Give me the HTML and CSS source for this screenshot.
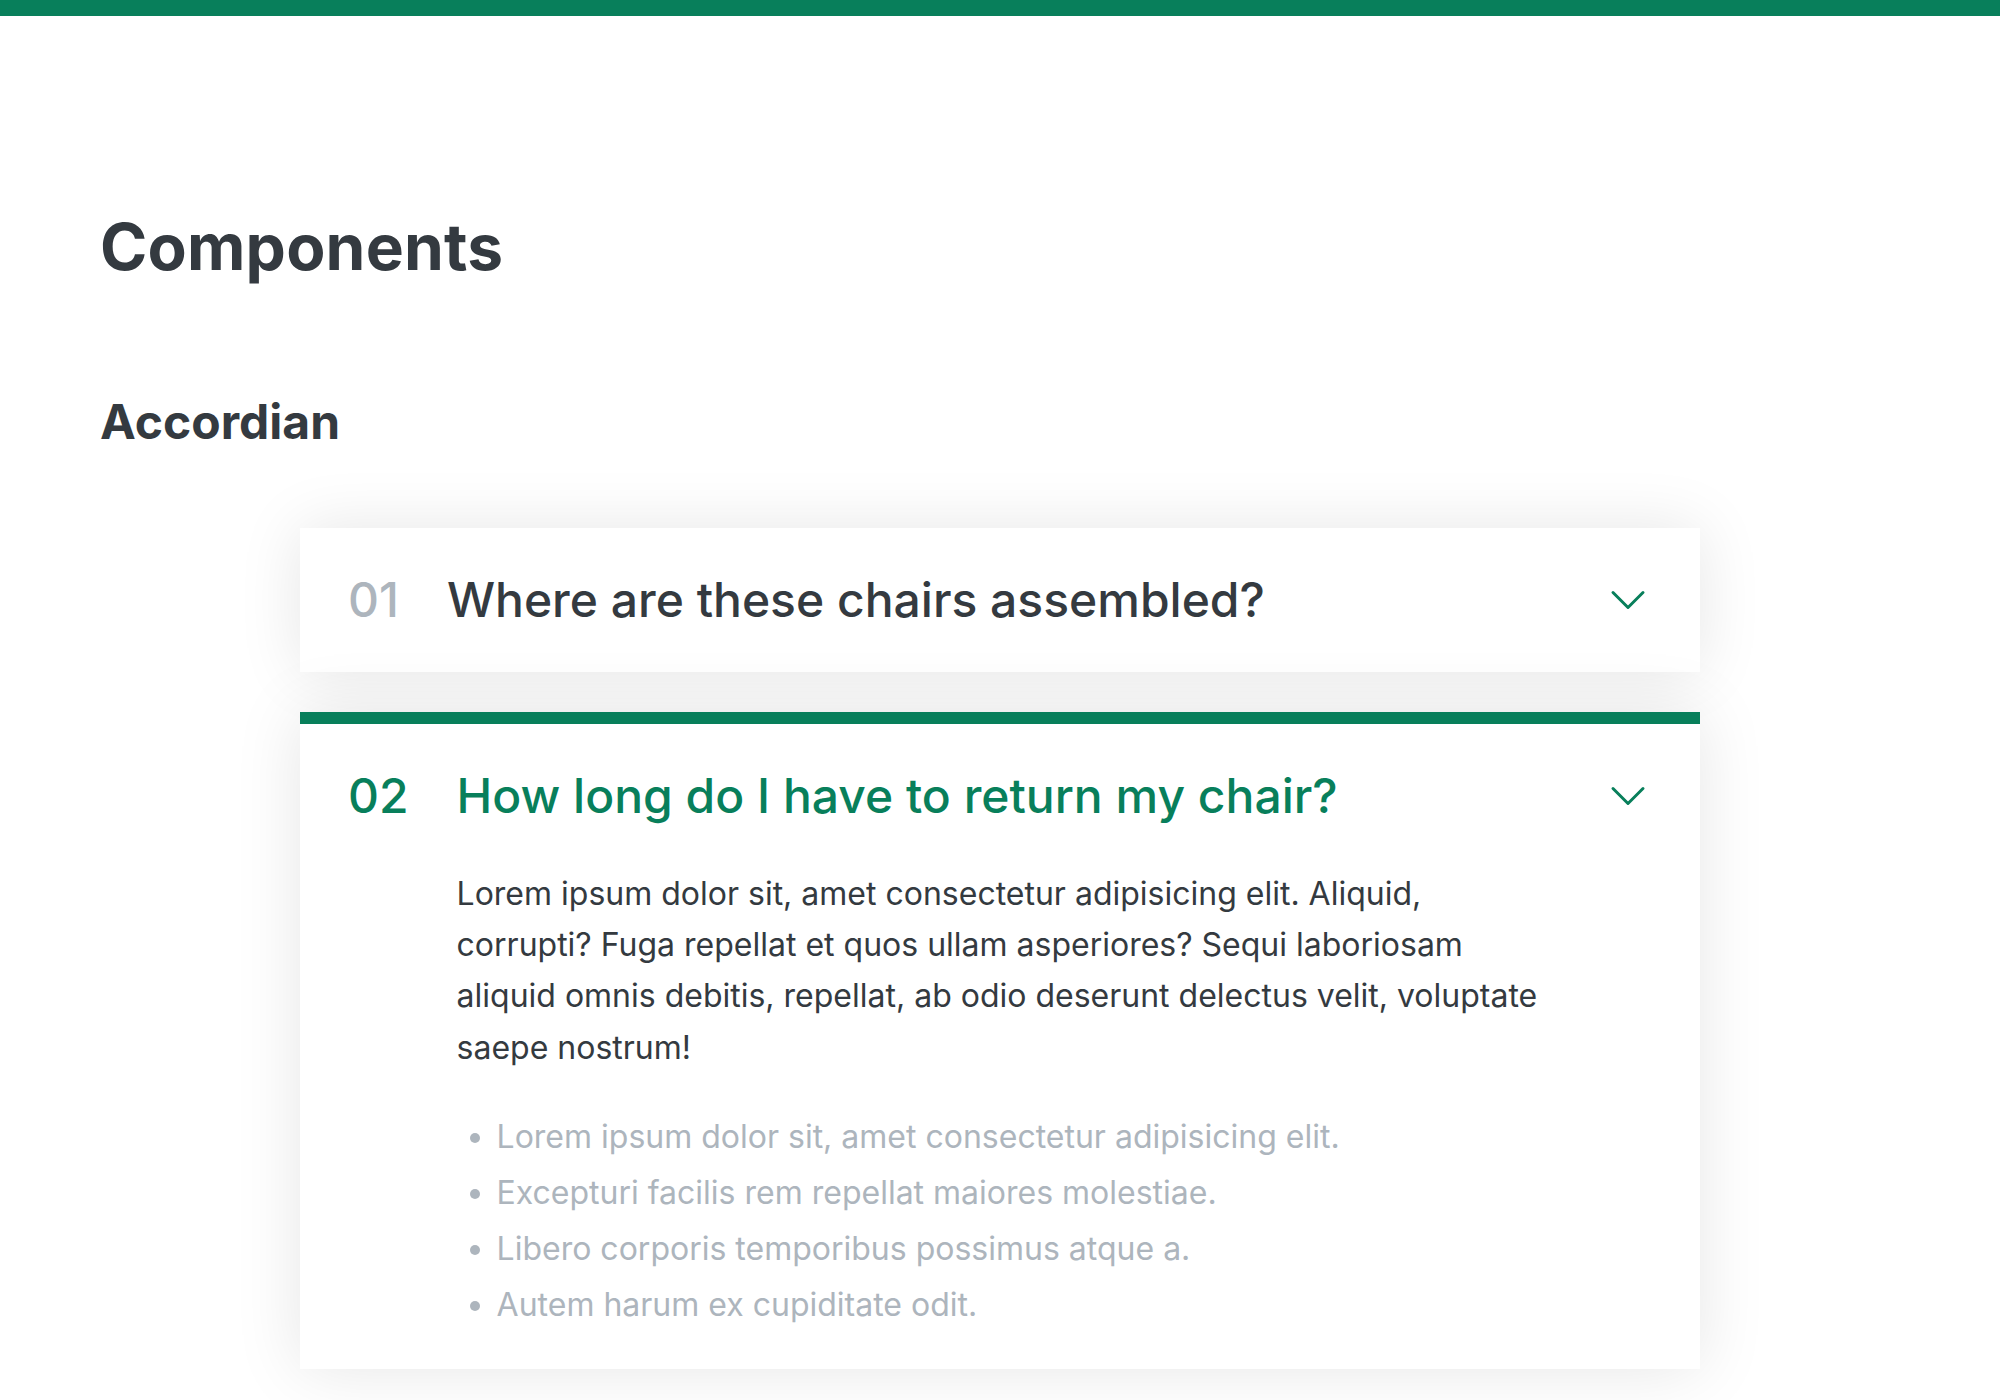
FILE: index.html
```html
<!DOCTYPE html>
<html lang="en">
<head>
<meta charset="utf-8">
<title>Components</title>
<link rel="stylesheet" href="styles.css">
</head>
<body>
<div class="container">
  <h1 class="page-title">Components</h1>
  <h2 class="section-title">Accordian</h2>

  <div class="accordion">
    <div class="item">
      <p class="number">01</p>
      <p class="text">Where are these chairs assembled?</p>
      <svg class="icon" xmlns="http://www.w3.org/2000/svg" fill="none" viewBox="0 0 24 24" stroke-width="1.5"><path stroke-linecap="round" stroke-linejoin="round" d="M19.5 8.25l-7.5 7.5-7.5-7.5"/></svg>
    </div>

    <div class="item open">
      <p class="number">02</p>
      <p class="text">How long do I have to return my chair?</p>
      <svg class="icon" xmlns="http://www.w3.org/2000/svg" fill="none" viewBox="0 0 24 24" stroke-width="1.5"><path stroke-linecap="round" stroke-linejoin="round" d="M19.5 8.25l-7.5 7.5-7.5-7.5"/></svg>
      <div class="hidden-box">
        <p>Lorem ipsum dolor sit, amet consectetur adipisicing elit. Aliquid, corrupti? Fuga repellat et quos ullam asperiores? Sequi laboriosam aliquid omnis debitis, repellat, ab odio deserunt delectus velit, voluptate saepe nostrum!</p>
        <ul>
          <li>Lorem ipsum dolor sit, amet consectetur adipisicing elit.</li>
          <li>Excepturi facilis rem repellat maiores molestiae.</li>
          <li>Libero corporis temporibus possimus atque a.</li>
          <li>Autem harum ex cupiditate odit.</li>
        </ul>
      </div>
    </div>
  </div>
</div>
</body>
</html>
```

FILE: styles.css
```css
* {
  margin: 0;
  padding: 0;
  box-sizing: border-box;
}

body {
  font-family: Inter, "Noto Sans", sans-serif;
  color: #343a40;
  border-top: 16px solid #087f5b;
  line-height: 1;
  background: #fff;
}

.container {
  padding: 199px 100px 200px 100px;
}

.page-title {
  font-size: 64px;
  font-weight: 700;
  line-height: 1;
  letter-spacing: 0.2px;
}

.section-title {
  font-size: 48px;
  font-weight: 700;
  line-height: 1;
  margin-top: 119px;
}

.accordion {
  width: 1400px;
  margin: 82px auto 0;
  display: flex;
  flex-direction: column;
  gap: 40px;
}

.item {
  box-shadow: 0 0 64px rgba(0, 0, 0, 0.1);
  padding: 48px;
  display: grid;
  grid-template-columns: auto 1fr auto;
  column-gap: 48px;
  row-gap: 48px;
  align-items: center;
  background: #fff;
}

.number,
.text {
  font-size: 48px;
  font-weight: 500;
  line-height: 1;
}

.number {
  color: #adb5bd;
}

.icon {
  width: 48px;
  height: 48px;
  stroke: #087f5b;
}

.hidden-box {
  grid-column: 2;
}

.open {
  border-top: 12px solid #087f5b;
}

.open .number,
.open .text {
  color: #087f5b;
}

.hidden-box p {
  font-size: 32px;
  line-height: 1.6;
  margin-bottom: 48px;
}

.hidden-box ul {
  color: #adb5bd;
  font-size: 32px;
  line-height: 1;
  margin-left: 40px;
  display: flex;
  flex-direction: column;
  gap: 24px;
}
```
